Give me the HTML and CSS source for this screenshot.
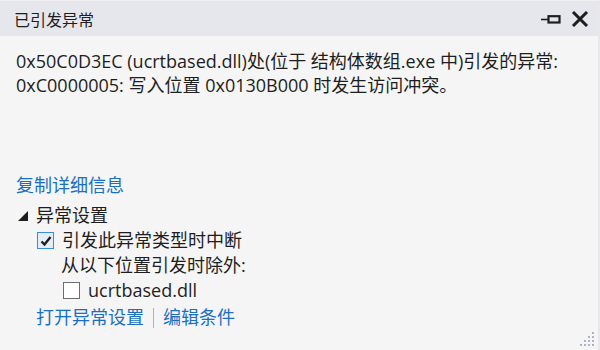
FILE: index.html
```html
<!DOCTYPE html>
<html lang="zh-CN">
<head>
    <meta charset="UTF-8">
    <title>已引发异常</title>
    <link rel="stylesheet" href="styles.css">
</head>
<body>
    <div class="popup">
        <div class="header">
            <span class="title">已引发异常</span>
            <div class="actions">
                <svg class="pin" width="20" height="10" viewBox="0 0 20 10">
                    <line x1="0" y1="4.5" x2="7" y2="4.5" stroke="#1e1e1e" stroke-width="1.6"/>
                    <rect x="7.5" y="1.2" width="11" height="6.3" fill="none" stroke="#1e1e1e" stroke-width="2.2"/>
                </svg>
                <svg class="close" width="18" height="16" viewBox="0 0 18 16">
                    <path d="M2 1 L16 15 M16 1 L2 15" stroke="#1e1e1e" stroke-width="3"/>
                </svg>
            </div>
        </div>
        <div class="content">
            <p class="message">0x50C0D3EC (ucrtbased.dll)处(位于 结构体数组.exe 中)引发的异常:<br>0xC0000005: 写入位置 0x0130B000 时发生访问冲突。</p>
            <a class="link copy" href="#">复制详细信息</a>
            <div class="settings">
                <div class="settings-head">
                    <svg class="caret" width="10" height="10" viewBox="0 0 10 10"><polygon points="10,0 10,10 0,10" fill="#1e1e1e"/></svg>
                    异常设置
                </div>
                <label class="check-row">
                    <span class="box checked">
                        <svg width="12" height="12" viewBox="0 0 12 12"><path d="M1.5 6.5 L4.5 9.5 L10.5 2" fill="none" stroke="#1e1e1e" stroke-width="2.4"/></svg>
                    </span>
                    引发此异常类型时中断
                </label>
                <div class="except">从以下位置引发时除外:</div>
                <label class="check-row sub">
                    <span class="box"></span>
                    ucrtbased.dll
                </label>
                <div class="links">
                    <a class="link" href="#">打开异常设置</a>
                    <span class="sep"></span>
                    <a class="link" href="#">编辑条件</a>
                </div>
            </div>
        </div>
        <svg class="grip" width="18" height="18" viewBox="0 0 18 18">
            <rect x="14" y="2" width="2" height="2"/>
            <rect x="10" y="6" width="2" height="2"/><rect x="14" y="6" width="2" height="2"/>
            <rect x="6" y="10" width="2" height="2"/><rect x="10" y="10" width="2" height="2"/><rect x="14" y="10" width="2" height="2"/>
            <rect x="2" y="14" width="2" height="2"/><rect x="6" y="14" width="2" height="2"/><rect x="10" y="14" width="2" height="2"/><rect x="14" y="14" width="2" height="2"/>
        </svg>
    </div>
</body>
</html>
```

FILE: styles.css
```css
body {
    margin: 0;
    font-family: "Segoe UI", "Open Sans", "Noto Sans CJK SC", sans-serif;
    color: #1e1e1e;
    background: #f5f5f5;
}
.popup {
    width: 600px;
    height: 350px;
    box-sizing: border-box;
    background: #f5f5f5;
    border-top: 1px solid #f0f0f3;
    border-right: 2px solid #e8e8ec;
    display: flex;
    flex-direction: column;
    position: relative;
}
.header {
    height: 35px;
    background: #e6e7ec;
    display: flex;
    align-items: center;
    justify-content: space-between;
    padding: 0 9px 0 14px;
}
.title {
    font-size: 16px;
}
.actions {
    display: flex;
    align-items: center;
    gap: 10px;
}
.pin {
    margin-top: 2px;
}
.content {
    padding: 13px 16px 0 16px;
    display: flex;
    flex-direction: column;
    align-items: flex-start;
}
.message {
    margin: 0;
    font-size: 18px;
    line-height: 24px;
}
.link {
    color: #1a6fc2;
    text-decoration: none;
    font-size: 18px;
}
.copy {
    margin-top: 76px;
    line-height: 25px;
}
.settings {
    margin-top: 5px;
    font-size: 18px;
    line-height: 25px;
}
.settings-head {
    display: flex;
    align-items: center;
    gap: 8px;
    margin-left: 2px;
}
.check-row {
    display: flex;
    align-items: center;
    gap: 8px;
    margin-left: 21px;
}
.check-row.sub {
    margin-left: 47px;
}
.box {
    width: 15px;
    height: 15px;
    border: 1px solid #6d6d6d;
    background: #ffffff;
    display: flex;
    align-items: center;
    justify-content: center;
}
.box.checked {
    border-color: #3c8ae0;
    background: #e4eefa;
}
.except {
    margin-left: 45px;
}
.links {
    display: flex;
    align-items: center;
    margin-left: 20px;
    margin-top: 2px;
}
.sep {
    width: 1px;
    height: 20px;
    background: #b0b0b6;
    margin: 0 9px;
}
.grip {
    position: absolute;
    right: 2px;
    bottom: 2px;
    fill: #aab3c8;
}
```
